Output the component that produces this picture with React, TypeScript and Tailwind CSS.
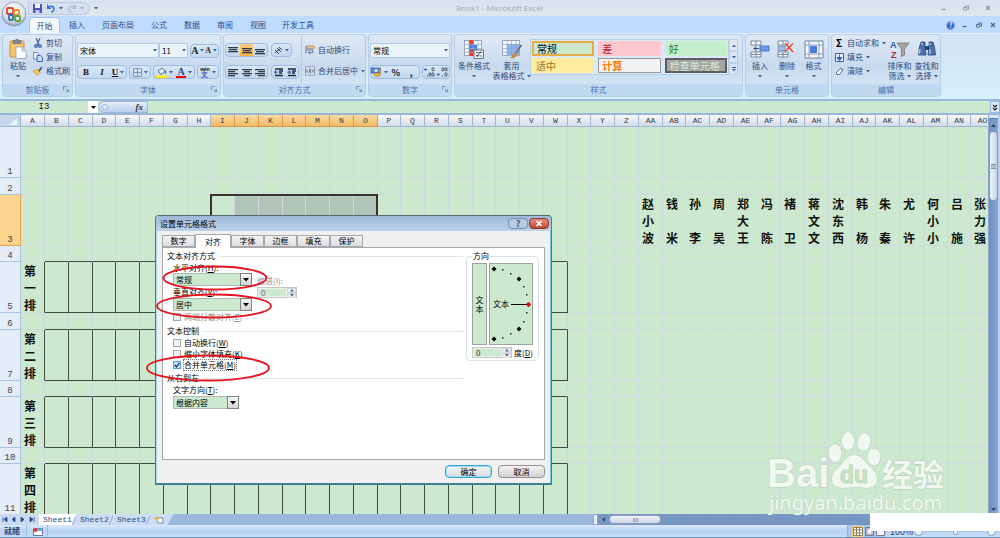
import React from "react";

type Kids = { children?: React.ReactNode };

function Caret() {
  return (
    <svg viewBox="0 0 4 3" className="h-[3px] w-1 shrink-0">
      <path d="M0 0h4L2 2.5z" fill="#3f5f94" />
    </svg>
  );
}

function Group({ title, width, launcher, children }: Kids & { title: string; width: string; launcher?: boolean }) {
  return (
    <section className={`${width} flex shrink-0 flex-col overflow-hidden rounded-sm border border-[#b5cde8] bg-gradient-to-b from-[#dfe9f5] via-[#c9daee] to-[#d9e8f7]`}>
      <div className="flex flex-1">{children}</div>
      <div className="relative flex h-3 items-center justify-center bg-[#c1d8f1] text-[8px] leading-3 text-[#4570ad]">
        {title}
        {launcher && (
          <svg viewBox="0 0 6 6" className="absolute right-[3px] top-[2px] h-[6px] w-[6px]">
            <path d="M.5 4V.5H4M3 3l2.500 2.500M5.500 3.200v2.300H3.200" fill="none" stroke="#6784ad" strokeWidth=".8" />
          </svg>
        )}
      </div>
    </section>
  );
}

function Box({ children, className = "" }: Kids & { className?: string }) {
  return <div className={`flex h-[14px] shrink-0 items-stretch rounded-sm border border-[#9dbbe0] bg-gradient-to-b from-[#d9e7f7] to-[#c3d7ef] ${className}`}>{children}</div>;
}

function Tool({ label, children, active }: Kids & { label: string; active?: boolean }) {
  return (
    <button aria-label={label} className={`flex flex-1 items-center justify-center gap-[2px] leading-none ${active ? "bg-gradient-to-b from-[#fbc97c] to-[#ffb63e]" : ""}`}>
      {children}
    </button>
  );
}

function Lines({ rows, y = 1 }: { rows: [number, number][]; y?: number }) {
  return (
    <svg viewBox="0 0 10 9" className="h-[9px] w-[10px]">
      {rows.map(([x, w], i) => (
        <rect key={i} x={x} y={y + i * 2} width={w} height="1.3" fill="#2f3a4c" />
      ))}
    </svg>
  );
}

function Indent({ flip }: { flip?: boolean }) {
  return (
    <svg viewBox="0 0 10 9" className="h-[9px] w-[10px]">
      <path d="M1 1h8M5 3h4M5 5h3M1 7.500h8" stroke="#222b3a" strokeWidth="1.300" />
      <path d={flip ? "M0 4.200h3M2 2.500l2 1.700L2 6z" : "M4 4.200H1M2 2.500L0 4.200 2 6z"} fill="#3467bd" stroke="#3467bd" strokeWidth=".8" />
    </svg>
  );
}

function Big({ icon, lines, width }: { icon: React.ReactNode; lines: string[]; width: string }) {
  return (
    <button className={`${width} flex shrink-0 flex-col items-center pt-[2px] text-[8px] leading-[10px] text-[#2c4a7c]`}>
      <span className="flex h-6 items-center">{icon}</span>
      <span className="whitespace-nowrap">{lines[0]}</span>
      <span className="flex h-[10px] items-center gap-[2px] whitespace-nowrap">
        {lines[1]}
        <Caret />
      </span>
    </button>
  );
}

function Small({ icon, text, caret }: { icon: React.ReactNode; text: string; caret?: boolean }) {
  return (
    <button className="flex h-[14px] items-center gap-[3px] whitespace-nowrap text-[8px] leading-none text-[#2c4a7c]">
      <span className="flex w-[10px] justify-center">{icon}</span>
      {text}
      {caret && <Caret />}
    </button>
  );
}

function RibbonSelect({ label, value, width }: { label: string; value: string; width: string }) {
  return (
    <div className={`relative h-[15px] shrink-0 ${width}`}>
      <select aria-label={label} className="block h-full w-full appearance-none border border-[#b3cae8] bg-[#eaf2fb] pl-[2px] text-[8px] font-normal leading-none text-black outline-none">
        <option>{value}</option>
      </select>
      <span className="pointer-events-none absolute inset-y-0 right-[2px] flex items-center">
        <Caret />
      </span>
    </div>
  );
}

function PasteIcon() {
  return (
    <svg viewBox="0 0 18 20" className="h-5 w-[18px]">
      <rect x="1" y="2" width="14" height="16" rx="1" fill="#f3c570" stroke="#c79236" />
      <path d="M4 1.500h2.500a1.500 1.500 0 0 1 3 0H12v3H4z" fill="#7d8794" stroke="#4e5763" strokeWidth=".5" />
      <path d="M7 8h6l4 4v7.500H7z" fill="#fdfeff" stroke="#8898ad" strokeWidth=".7" />
      <path d="M13 8v4h4" fill="#dce5ef" stroke="#8898ad" strokeWidth=".7" />
    </svg>
  );
}
function CutIcon() {
  return (
    <svg viewBox="0 0 10 10" className="h-[10px] w-[10px]">
      <path d="M3 0l3 7M7 0L4 7" stroke="#4a5f86" strokeWidth="1.200" />
      <circle cx="3" cy="8" r="1.300" fill="none" stroke="#264c9b" strokeWidth="1.100" />
      <circle cx="7" cy="8" r="1.300" fill="none" stroke="#264c9b" strokeWidth="1.100" />
    </svg>
  );
}
function CopyIcon() {
  return (
    <svg viewBox="0 0 10 10" className="h-[10px] w-[10px]">
      <path d="M.5.5h4L6 2v5H.5z" fill="#eef4fc" stroke="#6d8ec4" />
      <path d="M4 3.500h3.500L9.500 5.500v4H4z" fill="#c6dafa" stroke="#3c66ae" />
    </svg>
  );
}
function BrushIcon() {
  return (
    <svg viewBox="0 0 10 10" className="h-[10px] w-[10px]">
      <path d="M5 4.500L8.500.5l1 1L6.500 6z" fill="#4f596b" />
      <path d="M0 5l4-1.500 3 3L4 9.500C3 8 1.500 7 0 5z" fill="#f6cf52" stroke="#a57e22" strokeWidth=".5" />
    </svg>
  );
}
function BorderIcon() {
  return (
    <svg viewBox="0 0 9 9" className="h-[9px] w-[9px]">
      <path d="M.5.5h8v8h-8zM4.500.5v8M.5 4.500h8" fill="none" stroke="#7b91b1" strokeWidth=".9" />
    </svg>
  );
}
function FillIcon() {
  return (
    <svg viewBox="0 0 11 11" className="h-[11px] w-[11px]">
      <path d="M2 4l4-3 3 3.500L5 7.500z" fill="#e8eef7" stroke="#44608f" strokeWidth=".9" />
      <path d="M8.500 3c1.500.5 2 2 1.500 4-.8-.5-1-1.500-1.500-3z" fill="#2e62bd" />
      <rect y="8.500" width="11" height="2.500" fill="#ffed00" />
    </svg>
  );
}
function WrapIcon() {
  return (
    <svg viewBox="0 0 11 10" className="h-[10px] w-[11px]">
      <rect x="2" y=".5" width="8" height="3" fill="#f0bd85" stroke="#92744f" strokeWidth=".6" />
      <path d="M1 1v8M2 5h6.500v3H4" fill="none" stroke="#52699a" strokeWidth="1" />
      <path d="M5.500 6L3.500 8l2 1.800z" fill="#2d62be" />
    </svg>
  );
}
function MergeIcon() {
  return (
    <svg viewBox="0 0 11 10" className="h-[10px] w-[11px]">
      <rect x=".5" y=".5" width="10" height="9" fill="#f6f9fe" stroke="#6e85aa" strokeWidth=".8" />
      <path d="M5.500.5V3M5.500 7v2.500M.5 3h10M.5 7h10" stroke="#6e85aa" strokeWidth=".7" />
      <path d="M1 5h2.500M10 5H7.500" stroke="#243a66" />
      <path d="M5.500 3.500L4.500 6.500M5.500 3.500l1 3" stroke="#222" strokeWidth=".7" />
    </svg>
  );
}
function CurrencyIcon() {
  return (
    <svg viewBox="0 0 11 10" className="h-[10px] w-[11px]">
      <rect x=".5" y="1" width="9" height="5" fill="#5a88d8" stroke="#2f5596" strokeWidth=".7" />
      <circle cx="5" cy="3.500" r="1.500" fill="#dfebff" />
      <ellipse cx="6" cy="7.500" rx="3" ry="1.800" fill="#e9b73d" stroke="#94701c" strokeWidth=".5" />
      <path d="M9 2v6" stroke="#c79a2f" strokeWidth="1.500" />
    </svg>
  );
}
function Decimal({ more }: { more?: boolean }) {
  return (
    <svg viewBox="0 0 11 10" className="h-[10px] w-[11px]">
      <path d={more ? "M.5 2.500h3M.5 2.500l1.500-1.500M.5 2.500L2 4" : "M0 7.500h3M0 7.500L1.500 6M0 7.500L1.500 9"} stroke="#2e62bd" strokeWidth=".9" fill="none" />
      <g fill="none" stroke="#283448" strokeWidth=".8">
        <ellipse cx="9" cy="2.300" rx="1.100" ry="1.700" />
        <ellipse cx={more ? 6 : 5.8} cy={more ? 7.5 : 2.3} rx="1.100" ry="1.700" />
        <ellipse cx="9" cy="7.500" rx="1.100" ry="1.700" />
      </g>
      <rect x={more ? 3 : 5} y="8.500" width="1" height="1" fill="#283448" />
    </svg>
  );
}
function GridArt({ kind }: { kind: "cond" | "table" }) {
  return (
    <svg viewBox="0 0 20 19" className="h-[19px] w-5">
      <rect x=".5" y=".5" width="17" height="15" fill="#f8fbff" stroke="#93a4c3" />
      {kind === "cond" ? (
        <>
          <rect x="5" y="0" width="5" height="5" fill="#e4432e" />
          <rect x="5" y="5" width="8" height="5" fill="#4d80e0" />
          <rect x="5" y="10" width="5" height="6" fill="#e4432e" />
        </>
      ) : (
        <rect x="5" y="4" width="12" height="12" fill="#8db3ef" />
      )}
      <path d="M5 0v16M9.500 0v16M14 0v16M0 4.500h18M0 8.500h18M0 12.500h18" stroke="#93a4c3" strokeWidth=".7" />
      {kind === "cond" ? (
        <>
          <rect x="10" y="10" width="9.500" height="8.500" fill="#eef2f8" stroke="#525c6d" strokeWidth=".8" />
          <path d="M12 12.500h2.500M12 15.500h2.500M15.500 12.500H18M15.500 16H18M13 17l3.500-5.500" stroke="#333b49" strokeWidth=".8" />
        </>
      ) : (
        <>
          <path d="M19.500 5L14 13" stroke="#647084" strokeWidth="1.800" />
          <path d="M14 12l-4 3c0 2-1 2.500-2 3 4 1 7-1 7.500-4z" fill="#c98d40" />
        </>
      )}
    </svg>
  );
}
function CellsArt({ kind }: { kind: "ins" | "del" | "fmt" }) {
  if (kind === "fmt")
    return (
      <svg viewBox="0 0 20 19" className="h-[19px] w-5">
        <path d="M1 1h18v17H1z" fill="#f5f8fd" stroke="#6f80a0" />
        <path d="M5 1v17M15 1v17M1 5h18M1 14h18" stroke="#8495b3" strokeWidth=".9" />
        <rect x="6" y="6" width="7" height="7" fill="#4a7ed6" />
      </svg>
    );
  return (
    <svg viewBox="0 0 20 19" className="h-[19px] w-5">
      <path d="M1 1h10v4H1zM6 1v4M1 12h10v5H1zM6 12v5M1 14.500h10" fill="#f8fbff" stroke="#6a7b9a" strokeWidth=".9" />
      {kind === "ins" ? (
        <>
          <rect x="10" y="6" width="9" height="5" fill="#6a9bea" stroke="#3c67b6" strokeWidth=".8" />
          <path d="M9 8.500H4M6.500 6L4 8.500 6.500 11" fill="none" stroke="#33486f" />
        </>
      ) : (
        <>
          <rect x="1" y="6.500" width="7" height="4" fill="#9bbcf0" stroke="#6a7b9a" strokeWidth=".6" />
          <path d="M8 3l8 9M16 3.500l-8 8" stroke="#ee4b2b" strokeWidth="1.600" />
        </>
      )}
    </svg>
  );
}
function SortArt() {
  return (
    <svg viewBox="0 0 20 20" className="h-5 w-5 font-['Liberation_Sans',sans-serif]">
      <text x="0" y="9" fontSize="9" fontWeight="bold" fill="#2e5aae">A</text>
      <text x="1" y="19" fontSize="9" fontWeight="bold" fill="#a83232">Z</text>
      <path d="M7 4h12l-4.500 6v6l-3 1.500V10z" fill="#a9a69d" stroke="#6f6d66" strokeWidth=".7" />
    </svg>
  );
}
function FindArt() {
  return (
    <svg viewBox="0 0 20 18" className="h-[18px] w-5">
      <path d="M4 2h4v4l1 9H1.500l1-8zM12 2h4l1.500 5 1 8H11l1-9z" fill="#4c6ea9" stroke="#28457b" strokeWidth=".8" />
      <rect x="8" y="6" width="4" height="4" fill="#28457b" />
      <path d="M3 9l-.5 5M13 9v5M5 3v2M13 3v2" stroke="#b9cff2" strokeWidth="1.300" />
    </svg>
  );
}

function TitleBar() {
  return (
    <header className="flex h-4 shrink-0 items-center bg-gradient-to-b from-[#d9e2ee] to-[#dfe6ee] text-[#a3a8b0]">
      <div className="ml-7 flex h-[13px] w-[62px] items-center gap-[5px] rounded-r-full border border-[#bccbe0] bg-[#d5e0ee] pl-1">
        <button aria-label="保存">
          <svg viewBox="0 0 9 9" className="h-[9px] w-[9px]">
            <path d="M0 0h9v9H0z" fill="#4c55bb" />
            <path d="M2 0h5v4H2z" fill="#eff2fb" />
            <path d="M2.500 6h4v3h-4z" fill="#c5cbe9" />
          </svg>
        </button>
        <button aria-label="撤消" className="flex items-center gap-1">
          <svg viewBox="0 0 8 9" className="h-[9px] w-2">
            <path d="M1 3.500c3-2.500 6-1 6 1.500 0 1.500-1 2.500-2.500 3.500" fill="none" stroke="#3b6fd0" strokeWidth="1.600" />
            <path d="M0 0v5h4.500z" fill="#3b6fd0" />
          </svg>
          <Caret />
        </button>
        <button aria-label="恢复" className="flex items-center gap-1 opacity-40">
          <svg viewBox="0 0 8 9" className="h-[9px] w-2">
            <path d="M7 3.500C4 1 1 2.500 1 5c0 1.500 1 2.500 2.500 3.500" fill="none" stroke="#6d7f9c" strokeWidth="1.300" />
            <path d="M8 0v5H4z" fill="#6d7f9c" />
          </svg>
          <Caret />
        </button>
      </div>
      <span className="ml-1">
        <Caret />
      </span>
      <h1 className="flex-1 pr-10 text-center font-['Open_Sans','Noto_Sans',sans-serif] text-[8px] leading-none">Book1 - Microsoft Excel</h1>
      <WindowButtons className="gap-4 pr-[9px] text-[#8c929b]" />
    </header>
  );
}

function WindowButtons({ className }: { className: string }) {
  return (
    <div className={`flex items-center ${className}`}>
      <button aria-label="最小化">
        <svg viewBox="0 0 6 6" className="h-[6px] w-[6px]"><path d="M.5 4.500h4" stroke="currentColor" strokeWidth="1.200" /></svg>
      </button>
      <button aria-label="还原">
        <svg viewBox="0 0 6 6" className="h-[6px] w-[6px]"><path d="M1.500 1h4v3.500M.5 2.500h3.500V5h-3.500z" stroke="currentColor" strokeWidth=".9" fill="none" /></svg>
      </button>
      <button aria-label="关闭">
        <svg viewBox="0 0 6 6" className="h-[6px] w-[6px]"><path d="M1 1l4 4M5 1L1 5" stroke="currentColor" strokeWidth="1.200" /></svg>
      </button>
    </div>
  );
}

const RIBBON_TABS = [
  { name: "插入", width: "w-[34px]" },
  { name: "页面布局", width: "w-12" },
  { name: "公式", width: "w-[34px]" },
  { name: "数据", width: "w-8" },
  { name: "审阅", width: "w-[34px]" },
  { name: "视图", width: "w-8" },
  { name: "开发工具", width: "w-12" },
];

function RibbonTabs() {
  return (
    <nav className="flex h-[17px] shrink-0 items-end bg-[#bfdbff] pl-[29px] text-[8px] leading-none text-[#2d4d86]">
      <button className="h-4 w-[31px] rounded-t border border-b-0 border-[#a4c3ec] bg-[#f2f8fe]">开始</button>
      {RIBBON_TABS.map((t) => (
        <button key={t.name} className={`${t.width} h-4`}>{t.name}</button>
      ))}
      <div className="flex h-4 flex-1 items-center justify-end gap-[7px]">
        <button aria-label="帮助" className="flex h-[9px] w-[9px] items-center justify-center rounded-full border border-[#8aaee6] bg-[#2f66c5] text-[7px] font-bold leading-none text-white">?</button>
        <WindowButtons className="gap-2 pr-1 text-[#50617c]" />
      </div>
    </nav>
  );
}

const STYLE_TILES = [
  { name: "常规", look: "border-2 border-[#e9ac47] bg-[#cce8cf] text-black" },
  { name: "差", look: "border border-[#ffc7ce] bg-[#ffc7ce] text-[#b3202c]" },
  { name: "好", look: "border border-[#c6efce] bg-[#c6efce] text-[#1d7b29]" },
  { name: "适中", look: "border border-[#ffeb9c] bg-[#ffeb9c] text-[#a3711a]" },
  { name: "计算", look: "border border-[#9a9a9a] bg-[#f2f2f2] font-bold text-[#fa7d00]" },
  { name: "检查单元格", look: "border-2 border-[#5d5d5d] bg-[#a5a5a5] text-[#d5ead7]" },
];

function Ribbon() {
  return (
    <div className="flex h-[66px] shrink-0 gap-[2px] border-t border-[#e8f1fb] bg-gradient-to-b from-[#d3e2f4] to-[#d5effb] px-[2px] pb-[2px]">
      <Group title="剪贴板" width="w-[71px]" launcher>
        <Big width="w-[30px]" icon={<PasteIcon />} lines={["粘贴"]} />
        <div className="flex flex-col pt-[1px]">
          <Small icon={<CutIcon />} text="剪切" />
          <Small icon={<CopyIcon />} text="复制" />
          <Small icon={<BrushIcon />} text="格式刷" />
        </div>
      </Group>

      <Group title="字体" width="w-[146px]" launcher>
        <div className="flex flex-1 flex-col gap-[7px] px-[1px] pt-2">
          <div className="flex h-[15px] items-center">
            <RibbonSelect label="字体" value="宋体" width="w-[82px]" />
            <RibbonSelect label="字号" value="11" width="w-[29px]" />
            <Box className="ml-[2px] flex-1 font-['Liberation_Serif',serif] text-[10px] font-bold text-[#222]">
              <Tool label="增大字号"><span>A</span><Caret /></Tool>
              <Tool label="减小字号"><span className="text-[8px]">A</span><Caret /></Tool>
            </Box>
          </div>
          <div className="flex gap-[2px] font-['Liberation_Serif',serif] text-[9px] font-bold text-[#111]">
            <Box className="w-[50px]">
              <Tool label="加粗">B</Tool>
              <Tool label="倾斜"><i>I</i></Tool>
              <Tool label="下划线"><u>U</u><Caret /></Tool>
            </Box>
            <Box className="w-[22px]"><Tool label="边框"><BorderIcon /><Caret /></Tool></Box>
            <Box className="w-[42px]">
              <Tool label="填充颜色"><FillIcon /><Caret /></Tool>
              <Tool label="字体颜色"><span className="border-b-2 border-[#f00000] px-[1px] text-[10px] leading-[9px] text-[#28457b]">A</span><Caret /></Tool>
            </Box>
            <Box className="flex-1">
              <Tool label="拼音"><span className="flex flex-col items-center font-['Liberation_Sans',sans-serif] text-[5px] leading-[4px]">wén<span className="text-[7px] leading-[7px] text-[#3b4cc0]">文</span></span><Caret /></Tool>
            </Box>
          </div>
        </div>
      </Group>

      <Group title="对齐方式" width="w-[143px]" launcher>
        <div className="flex flex-col gap-[7px] pl-[1px] pt-2">
          <div className="flex h-[15px] gap-[3px]">
            <Box className="w-[43px]">
              <Tool label="顶端对齐"><Lines y={1} rows={[[0, 10], [1, 8], [0, 10]]} /></Tool>
              <Tool label="垂直居中" active><Lines y={2} rows={[[0, 10], [1, 8], [0, 10]]} /></Tool>
              <Tool label="底端对齐"><Lines y={3} rows={[[0, 10], [1, 8], [0, 10]]} /></Tool>
            </Box>
            <Box className="w-[21px]">
              <Tool label="方向">
                <svg viewBox="0 0 9 9" className="h-[9px] w-[9px]"><path d="M1 4l4 4M3 2l4 4M5 1l3 3M1 7l6-5" stroke="#3b4658" strokeWidth="1" /></svg>
                <Caret />
              </Tool>
            </Box>
          </div>
          <div className="flex gap-[3px]">
            <Box className="w-[43px]">
              <Tool label="左对齐"><Lines rows={[[0, 10], [0, 7], [0, 10], [0, 7]]} /></Tool>
              <Tool label="居中"><Lines rows={[[0, 10], [2, 6], [0, 10], [2, 6]]} /></Tool>
              <Tool label="右对齐"><Lines rows={[[0, 10], [3, 7], [0, 10], [3, 7]]} /></Tool>
            </Box>
            <Box className="w-7">
              <Tool label="减少缩进量"><Indent /></Tool>
              <Tool label="增加缩进量"><Indent flip /></Tool>
            </Box>
          </div>
        </div>
        <div className="ml-[2px] flex flex-col gap-[7px] border-l border-[#b4c9e4] pl-[3px] pt-2">
          <Small icon={<WrapIcon />} text="自动换行" />
          <Small icon={<MergeIcon />} text="合并后居中" caret />
        </div>
      </Group>

      <Group title="数字" width="w-[84px]" launcher>
        <div className="flex flex-1 flex-col gap-[7px] px-[1px] pt-2 text-[9px] font-bold text-[#222]">
          <RibbonSelect label="数字格式" value="常规" width="w-full" />
          <div className="flex gap-[2px]">
            <Box className="w-[50px]">
              <Tool label="会计数字格式"><CurrencyIcon /><Caret /></Tool>
              <Tool label="百分比">%</Tool>
              <Tool label="千位分隔">,</Tool>
            </Box>
            <Box className="flex-1">
              <Tool label="增加小数位数"><Decimal more /></Tool>
              <Tool label="减少小数位数"><Decimal /></Tool>
            </Box>
          </div>
        </div>
      </Group>

      <Group title="样式" width="w-[289px]">
        <Big width="w-[38px]" icon={<GridArt kind="cond" />} lines={["条件格式"]} />
        <Big width="w-[37px]" icon={<GridArt kind="table" />} lines={["套用", "表格格式"]} />
        <div className="mt-1 flex h-9 flex-1">
          <div className="grid flex-1 grid-cols-3 gap-x-1 gap-y-[2px] border border-[#b6cfec] bg-[#dbe8f8] p-[1px]">
            {STYLE_TILES.map((s) => (
              <button key={s.name} className={`flex items-center overflow-hidden whitespace-nowrap px-[3px] text-[10px] leading-none ${s.look}`}>{s.name}</button>
            ))}
          </div>
          <div className="mr-1 flex w-[9px] flex-col">
            <button aria-label="上一行" className="flex flex-1 items-center justify-center border border-[#c3cddb] bg-[#e3e6eb]"><span className="rotate-180"><Caret /></span></button>
            <button aria-label="下一行" className="flex flex-1 items-center justify-center border border-[#b6cfec] bg-[#d6e5f7]"><Caret /></button>
            <button aria-label="其他" className="flex flex-1 flex-col items-center justify-center gap-[1px] border border-[#b6cfec] bg-[#d6e5f7]"><span className="h-[1px] w-1 bg-[#3f5f94]" /><Caret /></button>
          </div>
        </div>
      </Group>

      <Group title="单元格" width="w-[84px]">
        <Big width="w-7" icon={<CellsArt kind="ins" />} lines={["插入"]} />
        <Big width="w-[26px]" icon={<CellsArt kind="del" />} lines={["删除"]} />
        <Big width="w-[27px]" icon={<CellsArt kind="fmt" />} lines={["格式"]} />
      </Group>

      <Group title="编辑" width="w-[110px]">
        <div className="flex w-[54px] shrink-0 flex-col pl-[2px] pt-[1px]">
          <Small icon={<b className="text-[10px] text-black">Σ</b>} text="自动求和" caret />
          <Small
            icon={<svg viewBox="0 0 9 9" className="h-[9px] w-[9px]"><path d="M.5.5h8v8h-8z" fill="#eaf1fc" stroke="#3b62ab" /><path d="M4.500 1.500v3M2 4.500h5L4.500 7.500z" fill="#2e62bd" stroke="#2e62bd" /></svg>}
            text="填充"
            caret
          />
          <Small
            icon={<svg viewBox="0 0 9 9" className="h-[9px] w-[9px]"><path d="M1 6l4-4.500 3 1L4.500 7.500H2z" fill="#fff" stroke="#4a5a77" strokeWidth=".9" /></svg>}
            text="清除"
            caret
          />
        </div>
        <Big width="w-[27px]" icon={<SortArt />} lines={["排序和", "筛选"]} />
        <Big width="w-[27px]" icon={<FindArt />} lines={["查找和", "选择"]} />
      </Group>
    </div>
  );
}

function OfficeButton() {
  return (
    <button aria-label="Office 按钮" className="absolute left-[1px] top-[1px] h-[26px] w-[26px]">
      <svg viewBox="0 0 26 26" className="h-full w-full">
        <defs>
          <radialGradient id="orb" cx="50%" cy="35%" r="65%">
            <stop offset="0" stopColor="#ffffff" />
            <stop offset=".7" stopColor="#d9dfe8" />
            <stop offset="1" stopColor="#8d99ab" />
          </radialGradient>
        </defs>
        <circle cx="13" cy="13" r="12" fill="url(#orb)" stroke="#8795ab" strokeWidth=".8" />
        <rect x="6" y="7" width="6" height="6" rx="1" fill="none" stroke="#d8432a" strokeWidth="1.800" />
        <rect x="13" y="9" width="5" height="5" rx="1" fill="none" stroke="#ef8a1d" strokeWidth="1.800" />
        <rect x="8" y="14" width="4" height="5" rx="1" fill="none" stroke="#2f6cc4" strokeWidth="1.800" />
        <rect x="14" y="15" width="5" height="5" rx="1" fill="none" stroke="#5da83a" strokeWidth="1.800" />
      </svg>
    </button>
  );
}

function FormulaBar() {
  return (
    <div className="flex h-4 shrink-0 border-y-2 border-[#9ab6db] bg-[#cce8cf]">
      <input aria-label="名称框" defaultValue="I3" className="w-[88px] bg-transparent text-center font-['Liberation_Mono',monospace] text-[9px] leading-none text-[#222] outline-none" />
      <button aria-label="名称列表" className="flex w-[10px] items-center justify-center bg-white">
        <svg viewBox="0 0 5 3" className="h-[3px] w-[5px]"><path d="M0 0h5L2.500 3z" fill="#000" /></svg>
      </button>
      <div className="flex w-[50px] items-center justify-between rounded-l-full border border-[#9db6d8] bg-gradient-to-b from-[#e3edf9] to-[#b7cdea] pl-[3px] pr-1">
        <span className="h-[6px] w-[6px] rounded-full border border-[#9fb4d2] bg-[#e6eefa]" />
        <button aria-label="插入函数" className="font-['Liberation_Serif',serif] text-[9px] font-bold italic leading-none text-[#333]">fx</button>
      </div>
      <input aria-label="编辑栏" className="min-w-0 flex-1 bg-transparent outline-none" />
      <button aria-label="展开编辑栏" className="flex w-[10px] items-center justify-center border border-[#9ab6db] bg-[#dce8f6]">
        <svg viewBox="0 0 6 7" className="h-[7px] w-[6px]"><path d="M1 1l2 2 2-2M1 4l2 2 2-2" fill="none" stroke="#222" strokeWidth="1.200" /></svg>
      </button>
    </div>
  );
}

const COLUMNS = Array.from({ length: 41 }, (_, i) => (i < 26 ? String.fromCharCode(65 + i) : "A" + String.fromCharCode(39 + i)));
const NAMES = ["赵小波", "钱 米", "孙 李", "周 吴", "郑大王", "冯 陈", "褚 卫", "蒋文文", "沈东西", "韩 杨", "朱 秦", "尤 许", "何小小", "吕 施", "张力强"];
const ROWS: { height: string; label?: string; names?: boolean }[] = [
  { height: "h-[51px]" },
  { height: "h-[17px]" },
  { height: "h-[51px]", names: true },
  { height: "h-4" },
  { height: "h-[51px]", label: "第一排" },
  { height: "h-[17px]" },
  { height: "h-[51px]", label: "第二排" },
  { height: "h-4" },
  { height: "h-[51px]", label: "第三排" },
  { height: "h-4" },
  { height: "h-[51px]", label: "第四排" },
];

function cellLook(r: number, c: number) {
  const seat = !!ROWS[r].label;
  const aboveSeat = !!ROWS[r + 1]?.label;
  const inBlock = c >= 1 && c <= 22;
  const bottom = inBlock && (seat || aboveSeat) ? "border-b-[#3f4b41]" : "border-b-[#cfd9e2]";
  const right = seat && c <= 22 ? "border-r-[#3f4b41]" : "border-r-[#cfd9e2]";
  const fill = r === 2 && c > 8 && c <= 14 ? "bg-[#b0c4b8]" : "";
  return `${bottom} ${right} ${fill}`;
}

function Stack({ text }: { text: string }) {
  return (
    <span className="flex flex-col gap-[1px] pl-[3px] text-[12px] font-bold leading-[18px] text-[#111]">
      {[...text].map((ch, i) => (
        <span key={i} className="h-4">{ch}</span>
      ))}
    </span>
  );
}

function Sheet() {
  return (
    <div className="flex min-h-0 flex-1 bg-[#b9d0ee]">
      <div className="relative min-w-0 flex-1 overflow-hidden bg-[#cce8cf]">
        <table className="w-[995px] table-fixed border-separate border-spacing-0">
          <colgroup>
            <col className="w-[21px]" />
            {COLUMNS.map((c, i) => (
              <col key={c} className={i % 4 === 3 ? "w-[23px]" : "w-6"} />
            ))}
          </colgroup>
          <thead>
            <tr className="h-3 text-[8px] leading-none text-[#333c48]">
              <th aria-label="全选" className="h-3 border-b border-r border-[#9eb6ce] bg-[#c6d6ea] p-0">
                <svg viewBox="0 0 20 10" className="block h-[10px] w-5"><path d="M17 2v7h-8z" fill="#eef3fa" /></svg>
              </th>
              {COLUMNS.map((c, i) => (
                <th key={c} className={`border-b border-r p-0 font-['Liberation_Mono',monospace] font-normal ${i > 7 && i < 15 ? "border-[#e0964a] bg-gradient-to-b from-[#f9d9a0] to-[#f2bb67]" : "border-[#9eb6ce] bg-gradient-to-b from-[#f7f9fc] to-[#d3dbe9]"}`}>{c}</th>
              ))}
            </tr>
          </thead>
          <tbody>
            {ROWS.map((row, r) => (
              <tr key={r} className={row.height}>
                <th className={`border-b border-r p-0 align-bottom font-['Liberation_Mono',monospace] text-[9px] font-normal leading-[10px] text-[#444] ${r === 2 ? "border-[#e8a24e] bg-[#ffd58d]" : "border-[#a9c3e2] bg-[#e4ecf7]"}`}>{r + 1}</th>
                {COLUMNS.map((c, i) => (
                  <td key={c} className={`border-b border-r p-0 align-top ${cellLook(r, i)}`}>
                    {i === 0 && row.label && <Stack text={row.label} />}
                    {row.names && i > 25 && <Stack text={NAMES[i - 26]} />}
                  </td>
                ))}
              </tr>
            ))}
          </tbody>
        </table>
        <div className="absolute left-[210px] top-[79px] h-[53px] w-[168px] border-2 border-[#3a2f33]" />
      </div>
      <div className="mr-[2px] flex w-[10px] flex-col items-center border-l border-[#8aa6cf] bg-gradient-to-r from-[#6f90c0] to-[#86a5d2]">
        <div className="h-1 w-full border-b border-[#5d7dab] bg-[#dbe7f6]" />
        <button aria-label="向上滚动" className="flex h-3 items-center">
          <svg viewBox="0 0 5 3" className="h-[3px] w-[5px]"><path d="M0 3h5L2.500 0z" fill="#2c4370" /></svg>
        </button>
        <div className="flex h-[70px] w-full items-center justify-center rounded-sm border border-[#7f93b2] bg-gradient-to-r from-[#f0f4f9] to-[#c6d3e6]">
          <span className="h-[5px] w-[5px] border-y border-[#8693a8] bg-[#b5c0d0]" />
        </div>
        <div className="flex-1" />
        <button aria-label="向下滚动" className="flex h-[10px] items-center">
          <svg viewBox="0 0 5 3" className="h-[3px] w-[5px]"><path d="M0 0h5L2.500 3z" fill="#2c4370" /></svg>
        </button>
      </div>
    </div>
  );
}

function SheetTabs() {
  return (
    <div className="flex h-[11px] shrink-0 bg-[#9cb6dc] font-['Liberation_Mono',monospace] text-[8px] leading-none text-[#2e4e86]">
      <div className="flex w-[39px] items-center justify-around bg-[#c9daf1] pr-[2px]">
        {["M1 0v5M5 0v5L2 2.500z", "M4 0v5L1 2.500z", "M1 0v5l3-2.500z", "M5 0v5M1 0v5l3-2.500z"].map((d) => (
          <button key={d} aria-label="工作表导航">
            <svg viewBox="0 0 6 5" className="h-[5px] w-[6px]"><path d={d} fill="#1f4893" stroke="#1f4893" strokeWidth=".7" /></svg>
          </button>
        ))}
      </div>
      {["Sheet1", "Sheet2", "Sheet3"].map((name, i) => (
        <button key={name} className={`flex w-[37px] items-center pl-1 ${i === 0 ? "bg-white" : "bg-[#cbdcf3]"}`}>
          <span className="flex-1 text-left">{name}</span>
          <svg viewBox="0 0 5 11" className="h-[11px] w-[5px] shrink-0"><path d="M5 0v11H0z" fill="#cbdcf3" /><path d="M5 0L0 11" stroke="#7f9cc8" strokeWidth=".8" /></svg>
        </button>
      ))}
      <button aria-label="插入工作表" className="flex w-6 items-center justify-between bg-[#cbdcf3] pl-1">
        <svg viewBox="0 0 10 8" className="h-2 w-[10px]"><path d="M2 2h7v5H4z" fill="#fff" stroke="#6580ab" strokeWidth=".9" /><circle cx="2.500" cy="2.500" r="2" fill="#f5b43c" /></svg>
        <svg viewBox="0 0 7 11" className="h-[11px] w-[7px]"><path d="M7 0v11H0z" fill="#9cb6dc" /></svg>
      </button>
      <div className="flex-1" />
      <div className="flex w-[407px] shrink-0 items-center bg-[#7796c4]">
        <span className="h-full w-[5px] border border-[#8ba6cf] bg-[#e8f1fb]" />
        <button aria-label="向左滚动" className="flex w-[11px] justify-center">
          <svg viewBox="0 0 3 5" className="h-[5px] w-[3px]"><path d="M3 0v5L0 2.500z" fill="#2c4370" /></svg>
        </button>
        <div className="flex h-[9px] w-[52px] items-center justify-center rounded-sm border border-[#8d9fbc] bg-gradient-to-b from-[#f2f5fa] to-[#c8d4e6]">
          <span className="h-1 w-[5px] border-x border-[#98a4b6] bg-[#b8c2d0]" />
        </div>
      </div>
    </div>
  );
}

function StatusBar() {
  return (
    <footer className="flex h-[13px] shrink-0 items-center border-b border-[#6f8fbd] bg-gradient-to-b from-[#dbe9fb] via-[#b7d1f3] to-[#cbdff8] pl-1 text-[8px] leading-none text-[#2a467a]">
      <span className="font-bold">就绪</span>
      <span className="mx-[6px] h-full w-[1px] bg-[#9dbbe3]" />
      <svg viewBox="0 0 10 9" className="h-[9px] w-[10px]"><path d="M.5 1.500h9v7h-9z" fill="#fff" stroke="#5a78ab" /><path d="M.5 1.500h9V4h-9z" fill="#7ea2dc" /><circle cx="2.500" cy="3" r="2" fill="#d8402a" /></svg>
      <span className="ml-1 h-full w-[1px] bg-[#9dbbe3]" />
      <div className="flex-1" />
      <div className="flex h-full items-center border-l border-[#8fafdc] bg-[#a8c5ee] pl-1">
        <button aria-label="普通" className="bg-[#fbd27c] p-[1px]"><svg viewBox="0 0 10 9" className="h-[9px] w-[10px]"><path d="M.5.5h9v8h-9zM3.500.5v8M6.500.5v8M.5 3h9M.5 6h9" fill="#fff" stroke="#79683d" strokeWidth=".8" /></svg></button>
        <button aria-label="页面布局" className="p-[1px]"><svg viewBox="0 0 9 9" className="h-[9px] w-[9px]"><path d="M.5.5h8v8h-8z" fill="#b5bdc9" stroke="#707c8f" /><path d="M3 2.500h3v4H3z" fill="#fff" /></svg></button>
        <button aria-label="分页预览" className="p-[1px]"><svg viewBox="0 0 9 9" className="h-[9px] w-[9px]"><path d="M.5.5h8v8h-8z" fill="#f4f6fa" stroke="#707c8f" /></svg></button>
      </div>
      <span className="w-7 pl-1 text-[9px]">100%</span>
      <div className="flex items-center gap-[2px] pr-1">
        <button aria-label="缩小" className="h-[9px] w-[9px] rounded-full border border-[#7f9ac4] bg-[#eff5fc]" />
        <input
          type="range"
          aria-label="显示比例"
          defaultValue="50"
          className="h-[2px] w-[60px] appearance-none bg-[#b3cbeb] [&::-webkit-slider-thumb]:h-[7px] [&::-webkit-slider-thumb]:w-[5px] [&::-webkit-slider-thumb]:appearance-none [&::-webkit-slider-thumb]:rounded-b-full [&::-webkit-slider-thumb]:border [&::-webkit-slider-thumb]:border-[#7f9ac4] [&::-webkit-slider-thumb]:bg-[#eff5fc]"
        />
        <button aria-label="放大" className="h-[9px] w-[9px] rounded-full border border-[#7f9ac4] bg-[#eff5fc]" />
      </div>
    </footer>
  );
}

function Access({ text, k }: { text: string; k: string }) {
  return (
    <>
      {text}(<u>{k}</u>)
    </>
  );
}

function Section({ title }: { title: string }) {
  return (
    <div className="flex h-[10px] items-center gap-1">
      <span>{title}</span>
      <span className="h-[1px] flex-1 bg-[#dde6ef]" />
    </div>
  );
}

function Combo({ id, value, width }: { id: string; value: string; width: string }) {
  return (
    <div className={`relative h-[13px] ${width}`}>
      <select id={id} className="block h-full w-full appearance-none border border-[#aebcb0] bg-[#cce8cf] pl-[2px] text-[8px] leading-none text-black outline-none">
        <option>{value}</option>
      </select>
      <span className="pointer-events-none absolute inset-y-0 right-0 flex w-3 items-center justify-center border border-[#7e8580] bg-gradient-to-b from-[#f5f5f5] to-[#d5d5d5]">
        <svg viewBox="0 0 6 4" className="h-1 w-[6px]"><path d="M0 0h6L3 3.500z" fill="#000" /></svg>
      </span>
    </div>
  );
}

function Spinner({ id, muted }: { id: string; muted?: boolean }) {
  return (
    <div className="flex h-[11px] w-10 border border-[#c3c8c4] bg-[#eef0ee]">
      <input id={id} defaultValue="0" className={`m-[1px] min-w-0 flex-1 bg-[#cce8cf] pl-[2px] text-[8px] leading-none outline-none ${muted ? "text-[#777]" : "text-[#333]"}`} />
      <div className="flex w-[9px] flex-col">
        <button aria-label="增加" className="flex flex-1 items-center justify-center border border-[#d3d6dc] bg-[#f1f2f5]"><svg viewBox="0 0 4 3" className="h-[3px] w-1"><path d="M0 2.500h4L2 0z" fill="#50629c" /></svg></button>
        <button aria-label="减少" className="flex flex-1 items-center justify-center border border-[#d3d6dc] bg-[#f1f2f5]"><svg viewBox="0 0 4 3" className="h-[3px] w-1"><path d="M0 0h4L2 2.500z" fill="#50629c" /></svg></button>
      </div>
    </div>
  );
}

function Check({ text, k, checked, disabled }: { text: string; k: string; checked?: boolean; disabled?: boolean }) {
  return (
    <label className={`flex h-[11px] items-center gap-[3px] ${disabled ? "text-[#8d8d8d]" : ""}`}>
      <span className="relative flex h-2 w-2">
        <input type="checkbox" defaultChecked={checked} disabled={disabled} className="h-2 w-2 appearance-none border border-[#a5aaaf] bg-[#eef0f2] checked:border-[#5a9bd0] checked:bg-[#c5e3f8]" />
        {checked && (
          <svg viewBox="0 0 8 8" className="pointer-events-none absolute inset-0 h-2 w-2"><path d="M1.800 4l1.700 2L6.300 1.800" fill="none" stroke="#17307c" strokeWidth="1.300" /></svg>
        )}
      </span>
      <span className={checked ? "outline-1 outline-dotted outline-[#777]" : ""}><Access text={text} k={k} /></span>
    </label>
  );
}

const DIAL: [number, number, boolean][] = [
  [4, 5, true], [13, 6, false], [21, 10, false], [29, 15, true], [34, 23, false], [37, 31, false],
  [37, 49, false], [34, 58, false], [29, 65, true], [21, 70, false], [13, 74, false], [4, 75, true],
];

function Orientation() {
  return (
    <fieldset className="flex h-[110px] w-[72px] flex-col rounded-sm border border-[#d7e1e8] px-[5px]">
      <legend className="px-[1px] leading-[10px]">方向</legend>
      <div className="mt-[2px] flex gap-[2px]">
        <button className="flex h-[82px] w-[15px] flex-col items-center justify-center border border-[#9aa69c] bg-[#cce8cf] leading-[9px]">
          <span>文</span>
          <span>本</span>
        </button>
        <div className="relative flex h-[82px] flex-1 items-center border border-[#9aa69c] bg-[#cce8cf] pl-[3px]">
          文本
          <svg viewBox="0 0 41 80" className="absolute inset-0 h-20 w-[41px]">
            <path d="M21 40.500h16" stroke="#000" />
            {DIAL.map(([x, y, big], i) =>
              big ? <path key={i} d={`M${x - 2.5} ${y}l2.500-2.500 2.500 2.500-2.500 2.500z`} fill="#000" /> : <rect key={i} x={x - 1} y={y - 1} width="1.500" height="1.500" fill="#222" />
            )}
            <path d="M36 40.500l2.500-2.500 2.500 2.500-2.500 2.500z" fill="#e01010" stroke="#7a0d0d" strokeWidth=".4" />
          </svg>
        </div>
      </div>
      <div className="mt-[2px] flex items-center gap-[2px] whitespace-nowrap">
        <Spinner id="deg" />
        <label htmlFor="deg"><Access text="度" k="D" /></label>
      </div>
    </fieldset>
  );
}

const DIALOG_TABS = ["数字", "对齐", "字体", "边框", "填充", "保护"];

function FormatDialog() {
  return (
    <div role="dialog" aria-label="设置单元格格式" className="absolute left-[155px] top-[215px] flex w-[397px] flex-col rounded-t border border-b-2 border-[#3f7f95] border-t-[#5b6673] bg-[#f0f0f0] px-[6px] pb-[5px] text-[8px] leading-[10px] text-black shadow-[inset_1px_0_0_#a8d8ec,inset_-1px_0_0_#6ccbe8]">
      <div className="-mx-[6px] flex h-[15px] items-center gap-[1px] rounded-t bg-gradient-to-b from-[#9db9da] to-[#bcd2ea] pl-1 pr-[2px]">
        <h2 className="flex-1">设置单元格格式</h2>
        <button aria-label="帮助" className="flex h-[11px] w-5 items-center justify-center rounded-sm border border-[#7890b0] bg-[#b5cae3] text-[9px] font-bold leading-none text-[#4c5a70]">?</button>
        <button aria-label="关闭" className="flex h-[11px] w-5 items-center justify-center rounded-sm border border-[#8c3a2e] bg-gradient-to-b from-[#dd8e7f] to-[#c2452d]">
          <svg viewBox="0 0 8 7" className="h-[7px] w-2"><path d="M1.500 1l5 5M6.500 1l-5 5" stroke="#fff" strokeWidth="1.700" /></svg>
        </button>
      </div>
      <div className="mt-[3px] flex h-[13px] items-end">
        {DIALOG_TABS.map((t, i) => (
          <button key={t} className={i === 1 ? "relative z-10 -mb-[1px] h-[14px] w-9 border border-b-0 border-[#a6a8ab] bg-white" : "h-3 w-[33px] border border-[#a6a8ab] bg-gradient-to-b from-[#f4f4f4] to-[#dedede]"}>
            {t}
          </button>
        ))}
      </div>
      <div className="flex h-[213px] justify-between border border-[#a6a8ab] bg-white pl-1 pr-[5px] pt-[3px]">
        <div className="flex w-[296px] flex-col">
          <Section title="文本对齐方式" />
          <div className="flex flex-col pl-[6px]">
            <label htmlFor="h-align" className="h-3 pt-[2px]"><Access text="水平对齐" k="H" />:</label>
            <div className="flex gap-[5px]">
              <div className="w-[79px]">
                <Combo id="h-align" value="常规" width="w-full" />
                <label htmlFor="v-align" className="block h-3 pt-[1px]"><Access text="垂直对齐" k="V" />:</label>
                <Combo id="v-align" value="居中" width="w-full" />
              </div>
              <div className="pt-[3px]">
                <label htmlFor="indent" className="block h-[11px] text-[#8d8d8d]">缩进(I):</label>
                <Spinner id="indent" muted />
              </div>
            </div>
            <Check text="两端分散对齐" k="E" disabled />
          </div>
          <div className="mt-1"><Section title="文本控制" /></div>
          <div className="flex flex-col pl-[6px] pt-[1px]">
            <Check text="自动换行" k="W" />
            <Check text="缩小字体填充" k="K" />
            <Check text="合并单元格" k="M" checked />
          </div>
          <div className="mt-[3px]"><Section title="从右到左" /></div>
          <div className="flex flex-col pl-[6px]">
            <label htmlFor="text-dir" className="h-[13px] pt-[2px]"><Access text="文字方向" k="T" />:</label>
            <Combo id="text-dir" value="根据内容" width="w-[66px]" />
          </div>
        </div>
        <Orientation />
      </div>
      <div className="flex justify-end gap-[6px] pt-[5px]">
        <button className="h-[13px] w-[47px] rounded-sm border border-[#3aa5d4] bg-gradient-to-b from-[#f3f3f3] to-[#d6dde1] leading-none shadow-[inset_0_0_0_1px_#9bdcf5]">确定</button>
        <button className="h-[13px] w-[47px] rounded-sm border border-[#949494] bg-gradient-to-b from-[#f3f3f3] to-[#d2d2d2] leading-none">取消</button>
      </div>
      <svg viewBox="0 0 130 120" className="pointer-events-none absolute -left-[10px] top-[47px] h-[120px] w-[130px]" fill="none" stroke="#e6141e" strokeWidth="1.800">
        <ellipse cx="69" cy="15" rx="51.500" ry="11.500" />
        <ellipse cx="68" cy="43" rx="57" ry="11.500" />
        <ellipse cx="62" cy="105" rx="61" ry="12.500" />
      </svg>
    </div>
  );
}

function Watermark() {
  return (
    <svg viewBox="0 0 182 90" className="pointer-events-none absolute bottom-[21px] right-[51px] h-[90px] w-[182px]" fill="#f1f8f2" stroke="#b3cfb7" strokeWidth="1" paintOrder="stroke">
      <text x="0" y="60" fontSize="40" fontWeight="bold" className="font-['Liberation_Sans',sans-serif]">Bai</text>
      <ellipse cx="68" cy="26" rx="6.500" ry="9" />
      <ellipse cx="81" cy="14" rx="6.500" ry="9" />
      <ellipse cx="97" cy="15" rx="6.500" ry="9" transform="rotate(12 97 15)" />
      <ellipse cx="107" cy="30" rx="6.500" ry="8.500" />
      <path d="M87 28c-7 0-9 6-14 11-4 4-8 7-8 13 0 7 6 9 11 9 4 0 7-1 12-1s8 1 12 1c5 0 10-3 10-9s-4-9-8-13c-5-5-8-11-15-11z" />
      <text x="73" y="56" fontSize="23" fontWeight="bold" fill="#c5e2c9" className="font-['Liberation_Sans',sans-serif]">du</text>
      <text x="115" y="59" fontSize="31" fontWeight="bold" className="font-['Noto_Sans_CJK_SC',sans-serif]">经验</text>
      <text x="2" y="83" fontSize="20" strokeWidth=".6" className="font-['Noto_Sans',sans-serif]">jingyan.baidu.com</text>
    </svg>
  );
}

export default function App() {
  return (
    <div className="relative flex h-screen flex-col overflow-hidden bg-[#bfdbff] font-['Noto_Sans_CJK_SC','Noto_Sans',sans-serif] text-[#2c4a7c]">
      <TitleBar />
      <RibbonTabs />
      <Ribbon />
      <FormulaBar />
      <Sheet />
      <SheetTabs />
      <StatusBar />
      <OfficeButton />
      <Watermark />
      <div className="absolute bottom-[7px] right-0 h-[18px] w-[130px] bg-white" />
      <FormatDialog />
    </div>
  );
}
